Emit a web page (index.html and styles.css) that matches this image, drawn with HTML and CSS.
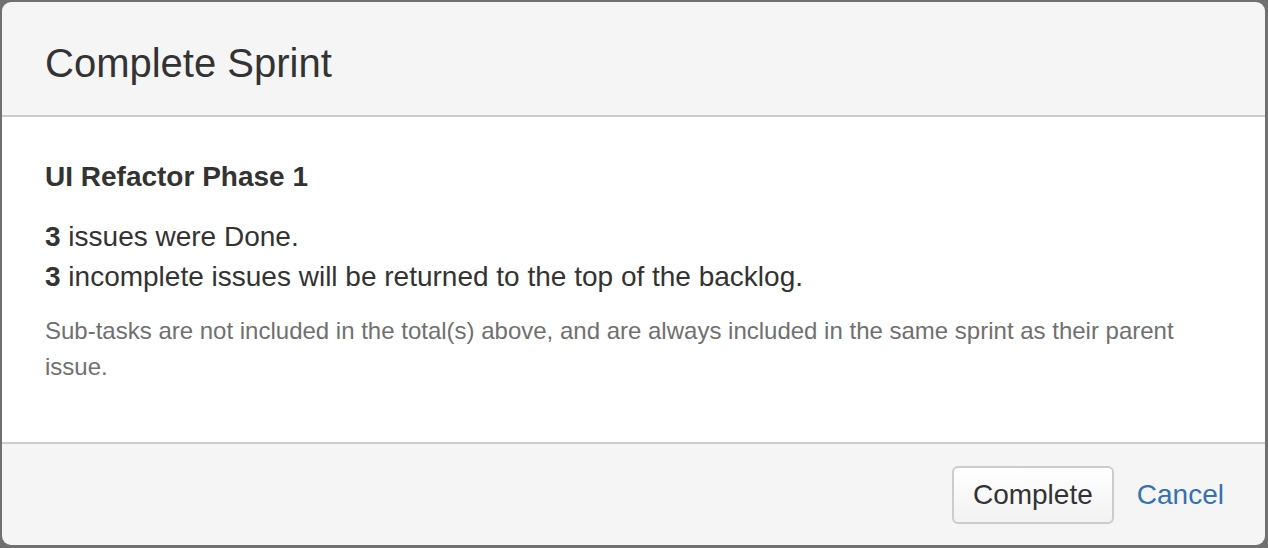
FILE: index.html
```
<!DOCTYPE html>
<html>
<head>
<meta charset="utf-8">
<link rel="stylesheet" href="styles.css">
</head>
<body>
<div class="backdrop">
  <div class="dialog">
    <header class="dialog-header">
      <h1 class="dialog-title">Complete Sprint</h1>
    </header>
    <div class="dialog-content">
      <h2 class="sprint-name">UI Refactor Phase 1</h2>
      <p class="summary"><strong>3</strong> issues were Done.<br><strong>3</strong> incomplete issues will be returned to the top of the backlog.</p>
      <p class="note">Sub-tasks are not included in the total(s) above, and are always included in the same sprint as their parent issue.</p>
    </div>
    <footer class="dialog-footer">
      <button class="btn">Complete</button>
      <a class="cancel" href="#">Cancel</a>
    </footer>
  </div>
</div>
</body>
</html>
```
FILE: styles.css
```
html, body {
  margin: 0;
  padding: 0;
  height: 100%;
}
body {
  background: #707070;
  font-family: "Liberation Sans", Arial, sans-serif;
  color: #333;
  overflow: hidden;
}
.backdrop {
  padding: 2px 3px 3px 2px;
  height: 548px;
  box-sizing: border-box;
}
.dialog {
  height: 543px;
  background: #f5f5f5;
  border-radius: 9px;
  display: flex;
  flex-direction: column;
  overflow: hidden;
}
.dialog-header {
  height: 115px;
  border-bottom: 2px solid #cccccc;
  display: flex;
  align-items: center;
  padding: 0 43px;
  box-sizing: border-box;
  flex: 0 0 auto;
}
.dialog-title {
  margin: 0;
  font-size: 40px;
  font-weight: normal;
  color: #333;
  line-height: 48px;
  padding-top: 8px;
}
.dialog-content {
  background: #fff;
  flex: 1 1 auto;
  padding: 40px 43px 0;
}
.sprint-name {
  margin: 0;
  font-size: 28px;
  line-height: 40px;
  font-weight: bold;
}
.summary {
  margin: 20px 0 0;
  font-size: 28px;
  line-height: 40px;
}
.note {
  margin: 16px 0 0;
  font-size: 24px;
  line-height: 36px;
  color: #707070;
}
.dialog-footer {
  height: 103px;
  box-sizing: border-box;
  border-top: 2px solid #cccccc;
  display: flex;
  align-items: center;
  justify-content: flex-end;
  padding: 0 41px 0 0;
  flex: 0 0 auto;
}
.btn {
  width: 162px;
  height: 58px;
  font-family: "Liberation Sans", Arial, sans-serif;
  font-size: 28px;
  color: #333;
  background: linear-gradient(#ffffff, #f2f2f2);
  border: 2px solid #cccccc;
  border-radius: 6px;
  padding: 0;
  margin-right: 23px;
}
.cancel {
  font-size: 28px;
  color: #3572b0;
  text-decoration: none;
}
```
